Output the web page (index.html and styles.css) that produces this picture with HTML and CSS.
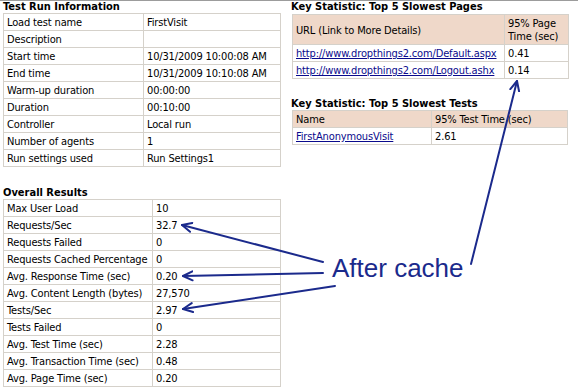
FILE: index.html
```html
<!DOCTYPE html>
<html lang="en">
<head>
<meta charset="utf-8">
<title>Load Test Summary</title>
<link rel="stylesheet" href="styles.css">
</head>
<body>
<div class="page">
  <div class="col col-left">
    <section class="block">
      <h2 class="title">Test Run Information</h2>
      <table class="grid run-info">
        <colgroup><col class="c-run-name"><col></colgroup>
        <tr><td>Load test name</td><td>FirstVisit</td></tr>
        <tr><td>Description</td><td></td></tr>
        <tr><td>Start time</td><td>10/31/2009 10:00:08 AM</td></tr>
        <tr><td>End time</td><td>10/31/2009 10:10:08 AM</td></tr>
        <tr><td>Warm-up duration</td><td>00:00:00</td></tr>
        <tr><td>Duration</td><td>00:10:00</td></tr>
        <tr><td>Controller</td><td>Local run</td></tr>
        <tr><td>Number of agents</td><td>1</td></tr>
        <tr><td>Run settings used</td><td>Run Settings1</td></tr>
      </table>
    </section>
    <section class="block overall">
      <h2 class="title">Overall Results</h2>
      <table class="grid overall-table">
        <colgroup><col class="c-overall-name"><col></colgroup>
        <tr><td>Max User Load</td><td>10</td></tr>
        <tr><td>Requests/Sec</td><td>32.7</td></tr>
        <tr><td>Requests Failed</td><td>0</td></tr>
        <tr><td>Requests Cached Percentage</td><td>0</td></tr>
        <tr><td>Avg. Response Time (sec)</td><td>0.20</td></tr>
        <tr><td>Avg. Content Length (bytes)</td><td>27,570</td></tr>
        <tr><td>Tests/Sec</td><td>2.97</td></tr>
        <tr><td>Tests Failed</td><td>0</td></tr>
        <tr><td>Avg. Test Time (sec)</td><td>2.28</td></tr>
        <tr><td>Avg. Transaction Time (sec)</td><td>0.48</td></tr>
        <tr><td>Avg. Page Time (sec)</td><td>0.20</td></tr>
      </table>
    </section>
  </div>
  <div class="col col-right">
    <section class="block">
      <h2 class="title">Key Statistic: Top 5 Slowest Pages</h2>
      <table class="grid pages">
        <colgroup><col class="c-url"><col></colgroup>
        <tr class="head"><td>URL (Link to More Details)</td><td class="wrap">95% Page Time (sec)</td></tr>
        <tr><td class="link-cell"><a href="#">http://www.dropthings2.com/Default.aspx</a></td><td>0.41</td></tr>
        <tr><td class="link-cell"><a href="#">http://www.dropthings2.com/Logout.ashx</a></td><td>0.14</td></tr>
      </table>
    </section>
    <section class="block tests-block">
      <h2 class="title">Key Statistic: Top 5 Slowest Tests</h2>
      <table class="grid tests">
        <colgroup><col class="c-test"><col></colgroup>
        <tr class="head"><td>Name</td><td>95% Test Time (sec)</td></tr>
        <tr><td><a href="#">FirstAnonymousVisit</a></td><td>2.61</td></tr>
      </table>
    </section>
  </div>
</div>
<div class="annotation">
  <svg class="arrows" width="578" height="391" viewBox="0 0 578 391">
    <defs>
      <marker id="head" viewBox="0 0 12 12" refX="10.5" refY="6" markerWidth="12" markerHeight="12" markerUnits="userSpaceOnUse" orient="auto">
        <path d="M1,1.5 L10.5,6 L1,10.5" fill="none" stroke="#1b2a8c" stroke-width="2" stroke-linecap="round" stroke-linejoin="round"/>
      </marker>
    </defs>
    <g stroke="#1b2a8c" stroke-width="2" fill="none" stroke-linecap="round">
      <path d="M323,262 L182,225" marker-end="url(#head)"/>
      <path d="M323,273 L183,276" marker-end="url(#head)"/>
      <path d="M335,286 L183,309" marker-end="url(#head)"/>
      <path d="M471,264 L517,81" marker-end="url(#head)"/>
    </g>
  </svg>
  <div class="label">After cache</div>
</div>
</body>
</html>
```
FILE: styles.css
```css
html, body {
  margin: 0;
  padding: 0;
  background: #ffffff;
}
body {
  width: 578px;
  height: 391px;
  overflow: hidden;
  position: relative;
  border-top: 1px solid #9c9c9c;
  box-sizing: border-box;
  font-family: "DejaVu Sans Condensed", "DejaVu Sans", sans-serif;
  font-size: 11px;
  color: #000000;
}
.page {
  display: flex;
  padding-left: 3px;
}
.col-left {
  width: 278px;
}
.col-right {
  width: 277px;
  margin-left: 11px;
}
.title {
  margin: 0;
  font-size: 11px;
  font-weight: bold;
  line-height: 12px;
  height: 12px;
  white-space: nowrap;
}
.col-right .title {
  margin-left: -1px;
  height: 13px;
}
.overall {
  margin-top: 20px;
}
.tests-block {
  margin-top: 19px;
}
.tests-block .title {
  height: 12px;
}
.grid {
  border-collapse: collapse;
  table-layout: fixed;
  width: 100%;
}
.grid td {
  border: 1px solid #d5d1ca;
  padding: 2px 2px 1px 3px;
  line-height: 13px;
  vertical-align: middle;
  white-space: nowrap;
  letter-spacing: -0.15px;
  overflow: hidden;
}
.grid td.wrap {
  white-space: normal;
}
.c-run-name { width: 140px; }
.c-overall-name { width: 149px; }
.c-url { width: 212px; }
.c-test { width: 139px; }
.tests { width: 276px; }
.head td {
  background: #efd8c9;
}
.link-cell {
  padding-right: 0;
}
a {
  color: #0a0a8c;
  text-decoration: underline;
}
.annotation {
  position: absolute;
  left: 0;
  top: -1px;
  width: 578px;
  height: 391px;
  pointer-events: none;
}
.arrows {
  position: absolute;
  left: 0;
  top: 0;
}
.label {
  position: absolute;
  left: 332px;
  top: 255px;
  font-family: "Liberation Sans", Arial, sans-serif;
  font-size: 26px;
  line-height: 26px;
  color: #1b2a8c;
  white-space: nowrap;
}
```
